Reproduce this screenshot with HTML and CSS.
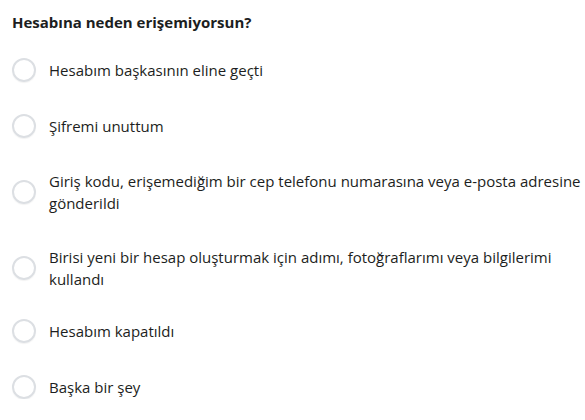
FILE: index.html
```html
<!DOCTYPE html>
<html lang="tr">
<head>
<meta charset="utf-8">
<link rel="stylesheet" href="styles.css">
</head>
<body>
<div class="panel">
  <h2 class="title">Hesabına neden erişemiyorsun?</h2>
  <ul class="options">
    <li class="option"><span class="radio"></span><span class="label">Hesabım başkasının eline geçti</span></li>
    <li class="option"><span class="radio"></span><span class="label">Şifremi unuttum</span></li>
    <li class="option"><span class="radio"></span><span class="label"><span class="line">Giriş kodu, erişemediğim bir cep telefonu numarasına veya e-posta adresine</span> <span class="line">gönderildi</span></span></li>
    <li class="option"><span class="radio"></span><span class="label"><span class="line">Birisi yeni bir hesap oluşturmak için adımı, fotoğraflarımı veya bilgilerimi</span> <span class="line">kullandı</span></span></li>
    <li class="option option--tight"><span class="radio"></span><span class="label">Hesabım kapatıldı</span></li>
    <li class="option"><span class="radio"></span><span class="label">Başka bir şey</span></li>
  </ul>
</div>
</body>
</html>
```
FILE: styles.css
```css
html, body {
  margin: 0;
  padding: 0;
  background: #ffffff;
}
body {
  font-family: "Open Sans", "Noto Sans", "Liberation Sans", sans-serif;
  color: #1c1e21;
  overflow: hidden;
}
.panel {
  padding: 12px 0 0 12px;
}
.title {
  margin: 0;
  font-size: 15px;
  line-height: 20px;
  font-weight: 700;
  color: #1c1e21;
}
.options {
  list-style: none;
  margin: 26px 0 0 0;
  padding: 0;
  display: flex;
  flex-direction: column;
  gap: 32px;
}
.option {
  display: flex;
  align-items: center;
  min-height: 24px;
}
.option--tight {
  margin-top: -3px;
}
.radio {
  flex: none;
  width: 20px;
  height: 20px;
  border: 2px solid #dcdfe3;
  border-radius: 50%;
  margin-right: 13px;
  box-shadow: 0 1px 1px rgba(0,0,0,0.05);
}
.label {
  font-size: 15px;
  line-height: 22px;
  color: #1c1e21;
}
.line {
  display: block;
  white-space: nowrap;
}
```
